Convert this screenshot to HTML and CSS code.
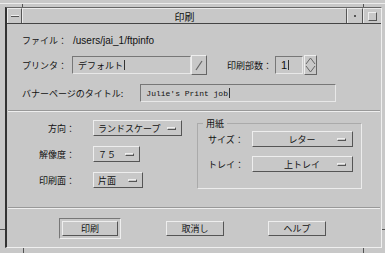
FILE: index.html
```html
<!DOCTYPE html>
<html lang="ja">
<head>
  <meta charset="UTF-8">
  <title>印刷</title>
  <link rel="stylesheet" href="styles.css">
</head>
<body>
  <div class="frame">
    <span class="tick tick-tl"></span>
    <span class="tick tick-tr"></span>
    <span class="tick tick-bl"></span>
    <span class="tick tick-br"></span>
    <span class="tick tick-lh"></span>
    <span class="tick tick-rh"></span>

    <div class="inner">
      <div class="titlebar">
        <div class="tb-box tb-menu"><span class="dash"></span></div>
        <div class="tb-box tb-title">印刷</div>
        <div class="tb-box tb-min"><span class="dot"></span></div>
        <div class="tb-box tb-max"><span class="sq"></span></div>
      </div>

      <div class="dialog">
        <div class="top">
          <div class="row file-row">
            <span class="label">ファイル：</span>
            <span class="path">/users/jai_1/ftpinfo</span>
          </div>

          <div class="row printer-row">
            <span class="label">プリンタ：</span>
            <div class="field printer-field">デフォルト<span class="caret"></span></div>
            <div class="btn-small">
              <svg width="10" height="12" viewBox="0 0 10 12"><path d="M2 11 L8 2" stroke="#666" stroke-width="1.2" fill="none"/></svg>
            </div>
            <span class="label copies-label">印刷部数：</span>
            <div class="field copies-field">1<span class="caret"></span></div>
            <div class="spin">
              <svg width="11" height="18" viewBox="0 0 11 18">
                <path d="M1 8 L5.5 2 L10 8" stroke="#666" fill="none"/>
                <path d="M1 10 L5.5 16 L10 10" stroke="#666" fill="none"/>
              </svg>
            </div>
          </div>

          <div class="row banner-row">
            <span class="label">バナーページのタイトル:</span>
            <div class="field banner-field">Julie's Print job<span class="caret"></span></div>
          </div>
        </div>

        <div class="sep"></div>

        <div class="mid">
          <div class="opts">
            <div class="opt">
              <span class="opt-label">方向：</span>
              <div class="menu-btn w-orient">ランドスケープ<span class="ind"></span></div>
            </div>
            <div class="opt">
              <span class="opt-label">解像度：</span>
              <div class="menu-btn w-res">７５<span class="ind"></span></div>
            </div>
            <div class="opt">
              <span class="opt-label">印刷面：</span>
              <div class="menu-btn w-side">片面<span class="ind"></span></div>
            </div>
          </div>

          <div class="paper">
            <span class="legend">用紙</span>
            <div class="opt">
              <span class="paper-label">サイズ：</span>
              <div class="menu-btn w-paper">レター<span class="ind"></span></div>
            </div>
            <div class="opt">
              <span class="paper-label">トレイ：</span>
              <div class="menu-btn w-paper">上トレイ<span class="ind"></span></div>
            </div>
          </div>
        </div>

        <div class="sep"></div>

        <div class="actions">
          <div class="default-ring"><div class="push">印刷</div></div>
          <div class="push">取消し</div>
          <div class="push">ヘルプ</div>
        </div>
      </div>
    </div>
  </div>
</body>
</html>
```

FILE: styles.css
```css
* {
  box-sizing: border-box;
}
body {
  margin: 0;
  width: 385px;
  height: 253px;
  overflow: hidden;
  background: #c8c8c8;
  color: #111;
  font-family: "Noto Sans CJK JP", "Liberation Sans", sans-serif;
  font-size: 9px;
  white-space: nowrap;
}

/* window manager frame */
.frame {
  position: relative;
  margin-top: 3px;
  height: 250px;
  border-top: 1px solid #ececec;
  padding: 3px 3px 5px 5px;
}
.tick {
  position: absolute;
  background: #555;
}
.tick-tl { left: 22px; top: 0; width: 1px; height: 3px; }
.tick-tr { left: 363px; top: 0; width: 1px; height: 3px; }
.tick-bl { left: 23px; bottom: 0; width: 1px; height: 5px; }
.tick-br { left: 363px; bottom: 0; width: 1px; height: 5px; }
.tick-lh { left: 0; top: 225px; width: 5px; height: 1px; }
.tick-rh { right: 0; top: 225px; width: 3px; height: 1px; }

.inner {
  height: 100%;
  display: flex;
  flex-direction: column;
  border-left: 2px solid #333;
  border-top: 1px solid #666;
  border-right: 1px solid #efefef;
  border-bottom: 1px solid #efefef;
}

/* title bar */
.titlebar {
  display: flex;
  height: 16px;
  border-bottom: 1px solid #444;
}
.tb-box {
  display: flex;
  align-items: center;
  justify-content: center;
  border-top: 1px solid #eaeaea;
  border-left: 1px solid #eaeaea;
  border-right: 1px solid #555;
}
.tb-menu { width: 15px; }
.tb-title {
  flex: 1;
  font-size: 10px;
}
.tb-min { width: 16px; }
.tb-max { width: 18px; border-right: none; }
.dash {
  width: 8px;
  height: 2px;
  background: #555;
  border-top: 1px solid #eee;
}
.dot {
  width: 2px;
  height: 2px;
  background: #555;
}
.sq {
  width: 9px;
  height: 9px;
  border: 1px solid #eee;
  border-right-color: #555;
  border-bottom-color: #555;
}

/* dialog */
.dialog {
  flex: 1;
  display: flex;
  flex-direction: column;
}
.top {
  height: 86px;
  padding: 9px 0 0 15px;
}
.row {
  display: flex;
  align-items: center;
}
.file-row {
  height: 14px;
}
.path {
  margin-left: 6px;
  font-family: "Liberation Sans", sans-serif;
  font-size: 10px;
}
.printer-row {
  margin-top: 8px;
  height: 20px;
}
.field {
  display: flex;
  align-items: center;
  height: 18px;
  padding-left: 5px;
  border: 1px solid #e8e8e8;
  border-top-color: #777;
  border-left-color: #777;
}
.caret {
  width: 1px;
  height: 10px;
  margin-left: 1px;
  background: #333;
}
.printer-field {
  width: 119px;
  margin-left: 5px;
}
.btn-small {
  display: flex;
  align-items: center;
  justify-content: center;
  width: 16px;
  height: 20px;
  border: 1px solid #eee;
  border-right-color: #666;
  border-bottom-color: #666;
}
.copies-label {
  margin-left: 20px;
}
.copies-field {
  width: 28px;
  margin-left: 3px;
  font-family: "Liberation Sans", sans-serif;
  font-size: 11px;
}
.spin {
  display: flex;
  align-items: center;
  justify-content: center;
  width: 13px;
  height: 20px;
  margin-left: 1px;
  border: 1px solid #eee;
  border-right-color: #666;
  border-bottom-color: #666;
}
.banner-row {
  margin-top: 9px;
  height: 18px;
}
.banner-field {
  width: 196px;
  margin-left: 17px;
  font-family: "Liberation Mono", monospace;
  font-size: 8px;
}

.sep {
  height: 2px;
  margin: 0 1px;
  border-top: 1px solid #999;
  border-bottom: 1px solid #eee;
}

/* options */
.mid {
  height: 95px;
  display: flex;
  padding-top: 8px;
}
.opts {
  width: 190px;
  display: flex;
  flex-direction: column;
  gap: 10px;
}
.opt {
  display: flex;
  align-items: center;
}
.opt-label {
  width: 68px;
  text-align: right;
}
.menu-btn {
  display: flex;
  align-items: center;
  justify-content: space-between;
  height: 16px;
  margin-left: 18px;
  padding: 0 5px 0 4px;
  border: 1px solid #eee;
  border-right-color: #555;
  border-bottom-color: #555;
}
.ind {
  flex: none;
  width: 9px;
  height: 3px;
  margin-left: 4px;
  border: 1px solid #eee;
  border-right-color: #555;
  border-bottom-color: #555;
}
.w-orient { width: 89px; }
.w-res { width: 47px; }
.w-side { width: 50px; }

.paper {
  position: relative;
  width: 165px;
  height: 66px;
  margin-top: 3px;
  padding: 7px 0 0 10px;
  border: 1px solid #ececec;
  border-top-color: #aaa;
  border-left-color: #aaa;
  display: flex;
  flex-direction: column;
  gap: 9px;
}
.legend {
  position: absolute;
  top: -7px;
  left: 5px;
  padding: 0 3px;
  background: #c8c8c8;
}
.paper-label {
  width: 40px;
}
.w-paper {
  position: relative;
  width: 101px;
  margin-left: 4px;
  justify-content: center;
}
.w-paper .ind {
  position: absolute;
  right: 6px;
}

/* buttons */
.actions {
  flex: 1;
  display: flex;
  align-items: center;
  padding-left: 52px;
}
.push {
  display: flex;
  align-items: center;
  justify-content: center;
  width: 58px;
  height: 15px;
  border: 1px solid #eee;
  border-right-color: #555;
  border-bottom-color: #555;
}
.default-ring {
  padding: 2px;
  border: 1px solid #777;
  border-right-color: #eee;
  border-bottom-color: #eee;
}
.default-ring .push {
  width: 56px;
}
.default-ring + .push {
  margin-left: 45px;
}
.push + .push {
  margin-left: 44px;
}
```
